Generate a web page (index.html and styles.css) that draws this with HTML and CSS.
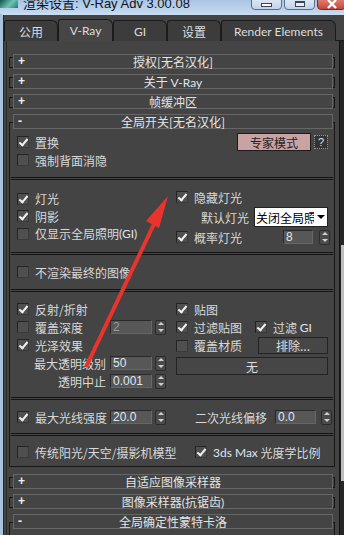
FILE: index.html
```html
<!DOCTYPE html>
<html lang="zh-CN">
<head>
    <meta charset="UTF-8">
    <title>渲染设置: V-Ray Adv 3.00.08</title>
    <link rel="stylesheet" href="styles.css">
</head>
<body>

<!-- Title bar -->
<div class="titlebar">
    <div class="app-icon"></div>
    <div class="title">渲染设置: V-Ray Adv 3.00.08</div>
    <div class="winbtns">
        <div class="wbtn min"><span></span></div>
        <div class="wbtn max"><span></span></div>
        <div class="wbtn close">
            <svg width="12" height="9" viewBox="0 0 12 9"><path d="M2 0 L10 8 M10 0 L2 8" stroke="#fff" stroke-width="2.4"/></svg>
        </div>
    </div>
</div>

<div class="window">
    <div class="tabs">
        <div class="tab">公用</div>
        <div class="tab active">V-Ray</div>
        <div class="tab">GI</div>
        <div class="tab">设置</div>
        <div class="tab wide">Render Elements</div>
    </div>

    <div class="client">
        <div class="main">
            <div class="roll"><div class="bar"><span class="sign">+</span>授权[无名汉化]</div></div>
            <div class="roll"><div class="bar"><span class="sign">+</span>关于 <span class="lat">V-Ray</span></div></div>
            <div class="roll"><div class="bar"><span class="sign">+</span>帧缓冲区</div></div>

            <div class="roll open">
                <div class="bar"><span class="sign">-</span>全局开关[无名汉化]</div>

                <div class="sec s1">
                    <div class="row">
                        <span class="cb on"></span>置换
                        <div class="expert">
                            <div class="btn pink">专家模式</div>
                            <div class="help">?</div>
                        </div>
                    </div>
                    <div class="row"><span class="cb"></span>强制背面消隐</div>
                </div>
                <div class="sep"></div>

                <div class="sec cols s2">
                    <div class="col-l">
                        <div class="row r17"><span class="cb on"></span>灯光</div>
                        <div class="row r17"><span class="cb on"></span>阴影</div>
                        <div class="row r17"><span class="cb"></span>仅显示全局照明<span class="lat">(GI)</span></div>
                    </div>
                    <div class="col-r">
                        <div class="row r20"><span class="cb on"></span>隐藏灯光</div>
                        <div class="row r20 end">
                            默认灯光
                            <div class="select"><span>关闭全局照明</span><i></i></div>
                        </div>
                        <div class="row r20">
                            <span class="cb on"></span>概率灯光
                            <div class="spin push">
                                <div class="field w30">8</div>
                                <div class="arrows"><i class="up"></i><i class="dn"></i></div>
                            </div>
                        </div>
                    </div>
                </div>
                <div class="sep"></div>

                <div class="sec s3">
                    <div class="row"><span class="cb"></span>不渲染最终的图像</div>
                </div>
                <div class="sep"></div>

                <div class="sec cols s4">
                    <div class="col-l">
                        <div class="row"><span class="cb on"></span>反射/折射</div>
                        <div class="row">
                            <span class="cb"></span><span class="lab">覆盖深度</span>
                            <div class="spin">
                                <div class="field dim">2</div>
                                <div class="arrows"><i class="up"></i><i class="dn"></i></div>
                            </div>
                        </div>
                        <div class="row"><span class="cb on"></span>光泽效果</div>
                        <div class="row">
                            <span class="lab right">最大透明级别</span>
                            <div class="spin">
                                <div class="field">50</div>
                                <div class="arrows"><i class="up"></i><i class="dn"></i></div>
                            </div>
                        </div>
                        <div class="row">
                            <span class="lab right">透明中止</span>
                            <div class="spin">
                                <div class="field">0.001</div>
                                <div class="arrows"><i class="up"></i><i class="dn"></i></div>
                            </div>
                        </div>
                    </div>
                    <div class="col-r">
                        <div class="row"><span class="cb on"></span>贴图</div>
                        <div class="row">
                            <span class="cb on"></span><span class="lab short">过滤贴图</span>
                            <span class="cb on"></span>过滤&nbsp;<span class="lat">GI</span>
                        </div>
                        <div class="row r19">
                            <span class="cb"></span>覆盖材质
                            <div class="btn exclude">排除...</div>
                        </div>
                        <div class="btn none">无</div>
                    </div>
                </div>
                <div class="sep"></div>

                <div class="sec s5">
                    <div class="row">
                        <span class="cb on"></span><span class="lab">最大光线强度</span>
                        <div class="spin">
                            <div class="field">20.0</div>
                            <div class="arrows"><i class="up"></i><i class="dn"></i></div>
                        </div>
                        <div class="spin push pull">
                            <span class="lab2">二次光线偏移</span>
                            <div class="field w40">0.0</div>
                            <div class="arrows gap"><i class="up"></i><i class="dn"></i></div>
                        </div>
                    </div>
                </div>
                <div class="sep"></div>

                <div class="sec s6">
                    <div class="row">
                        <span class="first"><span class="cb"></span>传统阳光/天空/摄影机模型</span>
                        <span class="cb on"></span><span class="lat">3ds Max</span>&nbsp;光度学比例
                    </div>
                </div>
            </div>

            <div class="roll"><div class="bar"><span class="sign">+</span>自适应图像采样器</div></div>
            <div class="roll"><div class="bar"><span class="sign">+</span>图像采样器<span class="lat">(</span>抗锯齿<span class="lat">)</span></div></div>
            <div class="roll open">
                <div class="bar"><span class="sign">-</span>全局确定性蒙特卡洛</div>
                <div class="sec tail"></div>
            </div>
        </div>
        <div class="scrollbar"><div class="thumb"></div></div>
    </div>
</div>

<!-- red annotation arrow -->
<svg class="arrow" width="344" height="535" viewBox="0 0 344 535">
    <line x1="86" y1="367" x2="154" y2="224" stroke="#e8342c" stroke-width="4"/>
    <polygon points="168,196 146,221 159,228" fill="#e8342c"/>
</svg>

</body>
</html>
```

FILE: styles.css
```css
* {
    box-sizing: border-box;
}
body {
    margin: 0;
    width: 344px;
    height: 535px;
    overflow: hidden;
    position: relative;
    background: #444;
    font-family: "Noto Sans CJK SC", "Liberation Sans", sans-serif;
    font-size: 12px;
    color: #d9d9d9;
}
.lat {
    font-family: Lato, "Liberation Sans", sans-serif;
    color: #dfe6ee;
}

/* title bar */
.titlebar {
    height: 13px;
    display: flex;
    overflow: hidden;
    background: linear-gradient(#a9c5e4, #c3d8ee);
}
.app-icon {
    width: 18px;
    height: 8px;
    margin-right: 5px;
    background: linear-gradient(135deg, #14524f, #6cc3b6 55%, #1f7a72);
}
.title {
    font-family: "Liberation Sans", "Noto Sans CJK SC", sans-serif;
    font-size: 13px;
    line-height: 13px;
    margin-top: -3px;
    color: #111;
}
.winbtns {
    margin-left: auto;
    display: flex;
    gap: 2px;
}
.wbtn {
    height: 11px;
    margin-top: -1px;
    border: 1px solid #5d6e86;
    border-radius: 0 0 4px 4px;
    display: flex;
    justify-content: center;
    align-items: flex-end;
    background: linear-gradient(#dbe6f3, #c2d3e8);
}
.wbtn.min {
    width: 31px;
}
.wbtn.min span {
    width: 11px;
    height: 4px;
    margin-bottom: 2px;
    background: #fff;
    border: 1px solid #3a4658;
}
.wbtn.max {
    width: 31px;
    align-items: flex-start;
}
.wbtn.max span {
    width: 10px;
    height: 6px;
    margin-top: 1px;
    border: 1px solid #3a4658;
    border-top-width: 2px;
    background: #e8eef6;
}
.wbtn.close {
    width: 29px;
    margin-right: -2px;
    border-color: #7d2a22;
    background: linear-gradient(#e07a6c, #c4473a);
    align-items: center;
}

/* window */
.window {
    height: 522px;
    border-left: 3px solid #a9c3df;
    border-top: 2px solid #c9dcf0;
    box-shadow: inset 1px 0 #262626;
    display: flex;
    flex-direction: column;
}
.tabs {
    height: 26px;
    display: flex;
    padding: 5px 0 0 1px;
    border-bottom: 1px solid #1b1b1b;
}
.tab {
    width: 54px;
    height: 21px;
    border: 1px solid #1b1b1b;
    border-bottom: none;
    border-radius: 3px 6px 0 0;
    background: #3c3c3c;
    display: flex;
    align-items: center;
    justify-content: center;
    font-family: Lato, "Noto Sans CJK SC", sans-serif;
    color: #dcdcdc;
}
.tab.active {
    width: 55px;
    height: 22px;
    margin-top: -1px;
    background: #464646;
}
.tab.wide {
    width: 115px;
}

.client {
    flex: 1;
    display: flex;
}
.main {
    width: 333px;
    margin-left: 3px;
    border-left: 1px solid #2a2a2a;
    padding-top: 13px;
}
.scrollbar {
    flex: 1;
    background: #262626;
    border-left: 1px solid #111;
    padding-top: 204px;
}
.thumb {
    height: 236px;
    margin-left: 1px;
    background: #bdbdbd;
}

/* rollouts */
.roll {
    position: relative;
    height: 14px;
    margin: 0 4px 6px 2px;
    border: 1px solid #161616;
    border-top: none;
}
.roll::before {
    content: '';
    position: absolute;
    left: -1px;
    right: -1px;
    top: 0;
    height: 3px;
    background: #444;
    border-bottom: 1px solid #161616;
}
.roll.open {
    height: auto;
    margin-bottom: 7px;
}
.roll.open::before {
    height: 8px;
}
.bar {
    position: relative;
    z-index: 1;
    height: 15px;
    margin: 0 1px 0 3px;
    border: 1px solid #666;
    background: #444;
    text-align: center;
    line-height: 13px;
    color: #e4e4e4;
}
.sign {
    position: absolute;
    left: 4px;
    top: 0;
    font-family: "Liberation Sans", sans-serif;
    font-weight: bold;
    color: #f0f0f0;
}

/* sections */
.sec {
    padding: 0 6px 0 7px;
}
.sep {
    height: 3px;
    margin: 0 1px;
    border-top: 1px solid #141414;
    border-bottom: 1px solid #141414;
}
.cols {
    display: flex;
}
.col-l {
    width: 159px;
    flex: none;
}
.col-r {
    flex: 1;
}
.s1 {
    padding-top: 4px;
    height: 48px;
}
.s2 {
    height: 72px;
}
.s2 .col-l {
    padding-top: 10px;
}
.s2 .col-r {
    padding-top: 7px;
}
.s3 {
    padding-top: 8px;
    height: 34px;
}
.s4 {
    height: 105px;
    padding-top: 8px;
}
.s5 {
    padding-top: 8px;
    height: 33px;
}
.s6 {
    padding-top: 7px;
    height: 30px;
}
.tail {
    height: 30px;
}

.row {
    height: 18px;
    display: flex;
    align-items: center;
    white-space: nowrap;
}
.row.r17 {
    height: 17.5px;
}
.row.r19 {
    height: 19px;
}
.row.r20 {
    height: 20px;
}
.row.end {
    justify-content: flex-end;
    gap: 5px;
}

/* checkbox */
.cb {
    position: relative;
    width: 12px;
    height: 12px;
    flex: none;
    margin-right: 6px;
    background: #4f4f4f;
    border: 1px solid #242424;
    border-right-color: #3a3a3a;
    border-bottom-color: #3a3a3a;
}
.cb.on::after {
    content: '';
    position: absolute;
    left: 3px;
    top: 0;
    width: 3px;
    height: 7px;
    border: solid #f2f2f2;
    border-width: 0 2px 2px 0;
    transform: rotate(40deg);
}

.lab {
    width: 75px;
    flex: none;
}
.lab.right {
    width: 89px;
    margin-right: 4px;
    text-align: right;
}
.lab.short {
    width: 61px;
}
.lab2 {
    margin-right: 5px;
}
.first {
    width: 178px;
    display: flex;
    align-items: center;
}

/* spinner */
.spin {
    display: flex;
    align-items: center;
    gap: 3px;
}
.spin.push {
    margin-left: auto;
}
.spin.pull {
    margin-right: -2px;
}
.field {
    width: 42px;
    height: 14px;
    padding-left: 2px;
    background: #575757;
    border: 1px solid #2a2a2a;
    border-right-color: #666;
    border-bottom-color: #666;
    font-family: "Liberation Sans", sans-serif;
    font-size: 12px;
    line-height: 12px;
    color: #dfe8f1;
}
.field.dim {
    color: #9a9a9a;
}
.field.w30 {
    width: 30px;
    margin-right: 3px;
}
.field.w40 {
    width: 41px;
    margin-right: 2px;
}
.arrows {
    width: 11px;
    height: 15px;
    border: 1px solid #2b2b2b;
    border-radius: 2px;
    background: #4b4b4b;
    display: flex;
    flex-direction: column;
    align-items: center;
    justify-content: space-around;
    margin-right: -2px;
}
.arrows .up {
    border-left: 3px solid transparent;
    border-right: 3px solid transparent;
    border-bottom: 3px solid #d0d0d0;
}
.arrows .dn {
    border-left: 3px solid transparent;
    border-right: 3px solid transparent;
    border-top: 3px solid #d0d0d0;
}

/* dropdown */
.select {
    width: 74px;
    height: 20px;
    display: flex;
    align-items: center;
    background: #fff;
    border: 1px solid #222;
    color: #000;
    font-size: 12px;
}
.select span {
    flex: 1;
    overflow: hidden;
    padding-left: 1px;
}
.select i {
    width: 13px;
    flex: none;
    display: flex;
    justify-content: center;
}
.select i::after {
    content: '';
    border-left: 4px solid transparent;
    border-right: 4px solid transparent;
    border-top: 4px solid #000;
}

/* buttons */
.btn {
    display: flex;
    align-items: center;
    justify-content: center;
    background: #464646;
    border: 1px solid #232323;
    color: #dedede;
}
.expert {
    margin-left: auto;
    display: flex;
    align-items: center;
    gap: 3px;
}
.btn.pink {
    width: 74px;
    height: 18px;
    background: #c9a3a4;
    border-color: #1c1c1c;
    color: #222;
}
.help {
    width: 14px;
    height: 14px;
    border: 1px dotted #9a9a9a;
    background: #333;
    color: #e0e0e0;
    font-family: "Liberation Sans", sans-serif;
    font-size: 11px;
    line-height: 12px;
    text-align: center;
}
.btn.exclude {
    width: 70px;
    height: 17px;
    margin-left: auto;
}
.btn.none {
    width: 152px;
    height: 18px;
    margin-top: 2px;
}

/* annotation overlay */
.arrow {
    position: absolute;
    left: 0;
    top: 0;
    pointer-events: none;
}
```
